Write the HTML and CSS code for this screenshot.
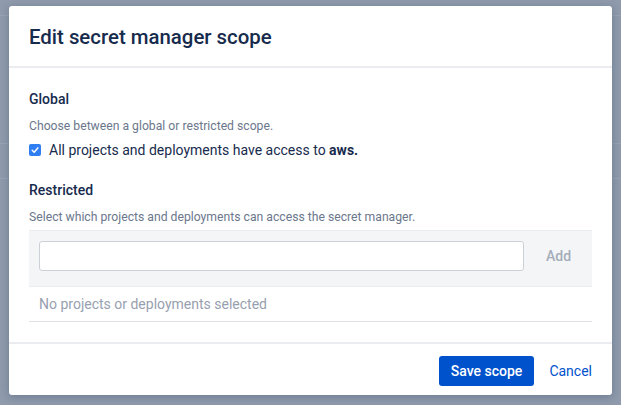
FILE: index.html
```html
<!DOCTYPE html>
<html>
<head>
<meta charset="utf-8">
<link rel="stylesheet" href="styles.css">
</head>
<body>
<div class="backdrop">
  <div class="bg-line l1"></div>
  <div class="bg-line l2"></div>
  <div class="bg-line l3"></div>
  <div class="dialog">
    <div class="header">
      <h1 class="title">Edit secret manager scope</h1>
    </div>
    <div class="body">
      <h2 class="section-title">Global</h2>
      <p class="help">Choose between a global or restricted scope.</p>
      <label class="check-row">
        <span class="checkbox">
          <svg width="12" height="12" viewBox="0 0 12 12"><path d="M3.2 6.2 L5.2 8.2 L8.8 3.9" fill="none" stroke="#fff" stroke-width="1.5" stroke-linecap="round" stroke-linejoin="round"/></svg>
        </span>
        <span>All projects and deployments have access to <b>aws.</b></span>
      </label>
      <h2 class="section-title restricted">Restricted</h2>
      <p class="help">Select which projects and deployments can access the secret manager.</p>
      <div class="add-box">
        <div class="input"></div>
        <span class="add">Add</span>
      </div>
      <div class="empty">No projects or deployments selected</div>
    </div>
    <div class="footer">
      <button class="save">Save scope</button>
      <a class="cancel">Cancel</a>
    </div>
  </div>
</div>
</body>
</html>
```
FILE: styles.css
```css
html, body {
  margin: 0;
  padding: 0;
}
body {
  font-family: Roboto, "Liberation Sans", sans-serif;
  color: #172b4d;
}
.backdrop {
  position: relative;
  width: 621px;
  height: 405px;
  background: #8f9aac;
  overflow: hidden;
  padding-top: 6px;
  padding-left: 9px;
  box-sizing: border-box;
}
.bg-line {
  position: absolute;
  left: 0;
  right: 0;
  height: 1px;
  background: #98a3b4;
}
.l1 { top: 15px; }
.l2 { top: 143px; }
.l3 { top: 178px; }
.dialog {
  position: relative;
  width: 603px;
  height: 389px;
  background: #fff;
  border-radius: 3px;
  box-shadow: 0 2px 8px rgba(9, 30, 66, 0.25);
  display: flex;
  flex-direction: column;
}
.header {
  height: 60px;
  border-bottom: 2px solid #ebecf0;
  padding: 0 21px 0 20px;
  display: flex;
  align-items: center;
}
.title {
  margin: 0;
  font-size: 20.4px;
  font-weight: 500;
  color: #172b4d;
  padding-top: 2px;
}
.body {
  padding: 21px 20px 0 20px;
  flex: 1;
}
.section-title {
  margin: 0;
  font-size: 14px;
  font-weight: 500;
  line-height: 20px;
  color: #172b4d;
}
.restricted {
  margin-top: 20px;
}
.help {
  margin: 9px 0 0 0;
  font-size: 12.2px;
  line-height: 16px;
  color: #6b778c;
}
.check-row {
  display: flex;
  align-items: center;
  gap: 8px;
  margin-top: 6px;
  font-size: 14px;
  line-height: 20px;
  color: #172b4d;
}
.check-row b {
  font-weight: 700;
}
.checkbox {
  width: 12px;
  height: 12px;
  border-radius: 2px;
  background: #2f7ef2;
  display: flex;
  align-items: center;
  justify-content: center;
}
.add-box {
  margin-top: 5px;
  height: 55px;
  background: #f4f5f7;
  border-top: 1px solid #ebecf0;
  border-bottom: 1px solid #ebecf0;
  display: flex;
  align-items: flex-start;
  padding: 10px 10px 0 10px;
  box-sizing: content-box;
  height: 45px;
}
.input {
  flex: none;
  width: 483px;
  height: 28px;
  background: #fff;
  border: 1px solid #ccd0d7;
  border-radius: 3px;
}
.add {
  margin-left: 22px;
  line-height: 30px;
  font-size: 14px;
  font-weight: 500;
  color: #a5adba;
}
.empty {
  height: 34px;
  border-bottom: 1px solid #dfe1e6;
  padding-left: 10px;
  display: flex;
  align-items: center;
  font-size: 14px;
  color: #97a0af;
}
.footer {
  height: 51px;
  border-top: 2px solid #ebecf0;
  display: flex;
  align-items: center;
  justify-content: flex-end;
  padding: 0 20px 0 0;
  gap: 15px;
}
.save {
  font-family: inherit;
  height: 30px;
  padding: 0 12px;
  border: none;
  border-radius: 3px;
  background: #0052cc;
  color: #fff;
  font-size: 14px;
  font-weight: 500;
  margin-top: 3px;
}
.cancel {
  font-size: 14px;
  color: #0052cc;
  margin-top: 3px;
}
```
